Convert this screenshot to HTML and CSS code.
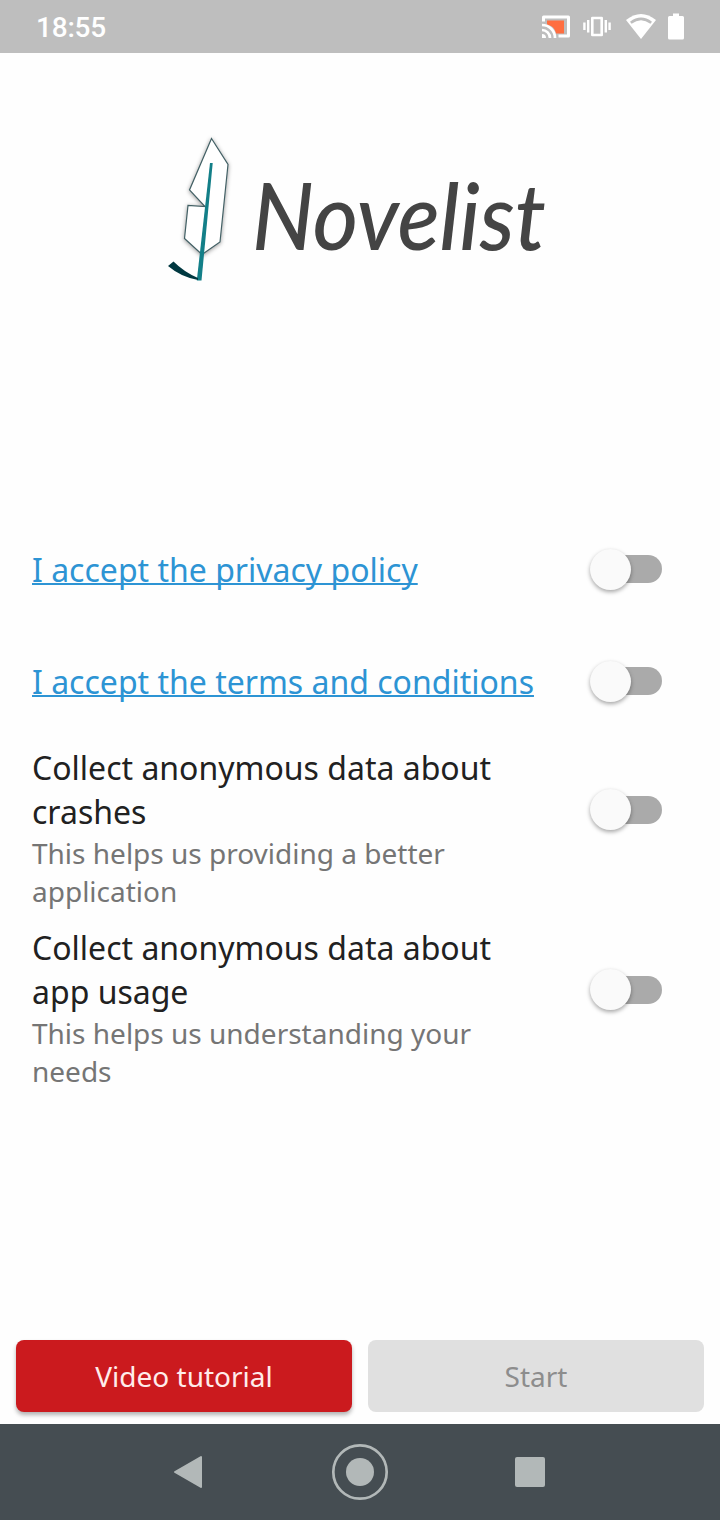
FILE: index.html
```html
<!DOCTYPE html>
<html lang="en">

<head>
  <meta charset="utf-8">
  <title>Novelist</title>
  <link rel="stylesheet" href="styles.css">
</head>

<body>

  <header class="status-bar">
    <span class="time">18:55</span>
    <svg class="status-icons" width="150" height="32" viewBox="537 10.500 150 32">
      <!-- cast -->
      <path d="M547 20h17v13h-8c-1-5-4-8-9-9z" fill="#ff6e40" />
      <path d="M543.500 21v-4.500h25v19h-10" fill="none" stroke="#fff" stroke-width="3" stroke-linejoin="round" />
      <path d="M542 24.500a13 13 0 0 1 13 13M542 29.500a8 8 0 0 1 8 8" fill="none" stroke="#fff" stroke-width="2.700" />
      <path d="M542 33.500a4 4 0 0 1 4 4h-4z" fill="#fff" />
      <!-- vibrate -->
      <path d="M592.300 17.500h9.400v17h-9.400z" fill="none" stroke="#fff" stroke-width="2.600" stroke-linejoin="round" />
      <path d="M588.200 19.500v12.500M605.800 19.500v12.500M584.400 22v7.500M609.600 22v7.500" stroke="#fff" stroke-width="2.400" />
      <!-- wifi -->
      <path d="M626 19.500Q641 7.500 656 19.500L641 38.500z" fill="#fff" />
      <path d="M630.800 22.300Q641 14.500 651.200 22.300" fill="none" stroke="#bebebe" stroke-width="2.600" />
      <!-- battery -->
      <path d="M673 13h6v2.500h3.500q1.500 0 1.500 1.500v20.500q0 1.500-1.500 1.500h-13q-1.500 0-1.500-1.500V17q0-1.500 1.500-1.500h3.500z" fill="#fff" />
    </svg>
  </header>

  <main class="content">
    <div class="logo">
      <svg class="feather" width="68" height="150" viewBox="165 135 68 150">
        <path class="feather-shape" d="M211.500 138.500L228 164.500L220 242L202 254.500L184.500 238.500L188 205.500L205 206.500L189.500 190z" />
        <path d="M210 163h2.700L201.500 280.500h-4.700z" fill="#137f88" />
        <path d="M168 266L173.500 261.500Q184 272 198 278V280Q181 277 168 266z" fill="#003840" />
      </svg>
      <svg class="wordmark" width="310" height="130" viewBox="248 150 310 130">
        <text x="252" y="250" textLength="294" lengthAdjust="spacingAndGlyphs">Novelist</text>
      </svg>
    </div>

    <div class="settings">
      <div class="row">
        <a class="link" href="#">I accept the privacy policy</a>
        <span class="switch"></span>
      </div>
      <div class="row">
        <a class="link" href="#">I accept the terms and conditions</a>
        <span class="switch"></span>
      </div>
      <div class="row row-large">
        <div class="text">
          <p class="title">Collect anonymous data about crashes</p>
          <p class="subtitle">This helps us providing a better application</p>
        </div>
        <span class="switch"></span>
      </div>
      <div class="row row-large">
        <div class="text">
          <p class="title">Collect anonymous data about app usage</p>
          <p class="subtitle">This helps us understanding your needs</p>
        </div>
        <span class="switch"></span>
      </div>
    </div>

    <div class="actions">
      <button class="primary">Video tutorial</button>
      <button disabled>Start</button>
    </div>
  </main>

  <nav class="nav-bar">
    <svg width="376" height="60" viewBox="172 1442 376 60">
      <path d="M175 1472L201 1457V1487z" fill="#b2b8b8" stroke="#b2b8b8" stroke-width="2" stroke-linejoin="round" />
      <circle cx="360" cy="1472" r="26.700" fill="none" stroke="#b2b8b8" stroke-width="2.700" />
      <circle cx="360" cy="1472" r="14" fill="#b2b8b8" />
      <rect x="515" y="1457" width="30" height="30" rx="2" fill="#b2b8b8" />
    </svg>
  </nav>

</body>

</html>
```
FILE: styles.css
```css
* {
  margin: 0;
  padding: 0;
  box-sizing: border-box;
}

body {
  height: 1520px;
  display: flex;
  flex-direction: column;
  background: #fefefe;
  color: #212121;
  font-family: "Noto Sans", sans-serif;
}

.status-bar {
  height: 53px;
  padding: 0 33px 0 36px;
  display: flex;
  align-items: center;
  justify-content: space-between;
  background: #bebebe;
}

.time {
  padding-top: 2px;
  color: #fff;
  font: 500 28px/32px Roboto, sans-serif;
  letter-spacing: -0.2px;
}

.content {
  flex: 1;
  display: flex;
  flex-direction: column;
}

.logo {
  height: 460px;
  padding: 82px 0 0 165px;
  display: flex;
  align-items: flex-start;
  gap: 15px;
}

.feather-shape {
  fill: #fff;
  stroke: #426065;
  stroke-width: 1.2;
  filter: drop-shadow(0 1px 2px rgba(0, 0, 0, 0.4));
}

.wordmark {
  margin-top: 15px;
  fill: #444;
  font-family: Lato, sans-serif;
  font-size: 92px;
  font-style: italic;
  font-weight: 500;
}

.row {
  height: 112px;
  padding: 0 54px 0 32px;
  display: flex;
  align-items: center;
  justify-content: space-between;
}

.row-large {
  height: 180px;
  padding-top: 9px;
  align-items: flex-start;
}

.row-large .switch {
  margin-top: 43px;
}

.text {
  width: 480px;
}

.link,
.title {
  font-size: 32px;
  line-height: 44px;
}

.link {
  padding-top: 2px;
  color: #2d94d4;
  text-decoration-thickness: 2px;
  text-decoration-skip-ink: none;
}

.subtitle {
  color: #757575;
  font-size: 28px;
  line-height: 38px;
}

.switch {
  width: 76px;
  height: 41px;
  display: flex;
  align-items: center;
}

.switch::before {
  content: "";
  width: 41px;
  height: 41px;
  z-index: 1;
  border-radius: 50%;
  background: #fafafa;
  box-shadow: 0 2px 4px rgba(0, 0, 0, 0.35);
}

.switch::after {
  content: "";
  width: 52px;
  height: 28px;
  margin-left: -21px;
  border-radius: 14px;
  background: #aaa;
}

.actions {
  margin-top: auto;
  padding: 0 16px 12px;
  display: flex;
  gap: 16px;
}

button {
  flex: 1;
  height: 72px;
  border: none;
  border-radius: 8px;
  background: #e0e0e0;
  color: #8d8d8d;
  font: 28px "Noto Sans", sans-serif;
}

.primary {
  background: #cb1a1e;
  color: #ffeceb;
  box-shadow: 0 3px 4px rgba(0, 0, 0, 0.3);
}

.nav-bar {
  height: 96px;
  display: flex;
  align-items: center;
  justify-content: center;
  background: #454d52;
}
```
